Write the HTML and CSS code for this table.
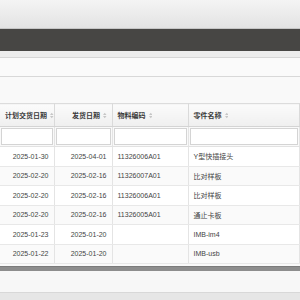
FILE: index.html
```html
<!DOCTYPE html>
<html lang="zh-CN">
<head>
    <meta charset="UTF-8">
    <title>发货计划</title>
    <link rel="stylesheet" href="styles.css">
</head>
<body>
    <div class="toolbar"></div>
    <div class="navbar"></div>
    <div class="tabs"></div>
    <div class="search-bar"></div>

    <div class="content">
        <div class="grid">
            <table class="grid-table">
                <colgroup>
                    <col class="col-plan">
                    <col class="col-ship">
                    <col class="col-code">
                    <col>
                </colgroup>
                <thead>
                    <tr class="head-row">
                        <th class="num">计划交货日期<svg class="sort" viewBox="0 0 4 8"><path d="M0 3.3 2 0.8 4 3.3Z M0 4.7 2 7.2 4 4.7Z"/></svg></th>
                        <th class="num">发货日期<svg class="sort" viewBox="0 0 4 8"><path d="M0 3.3 2 0.8 4 3.3Z M0 4.7 2 7.2 4 4.7Z"/></svg></th>
                        <th>物料编码<svg class="sort" viewBox="0 0 4 8"><path d="M0 3.3 2 0.8 4 3.3Z M0 4.7 2 7.2 4 4.7Z"/></svg></th>
                        <th>零件名称<svg class="sort" viewBox="0 0 4 8"><path d="M0 3.3 2 0.8 4 3.3Z M0 4.7 2 7.2 4 4.7Z"/></svg></th>
                    </tr>
                    <tr class="filter-row">
                        <td><input class="filter-input" type="text"></td>
                        <td><input class="filter-input" type="text"></td>
                        <td><input class="filter-input" type="text"></td>
                        <td><input class="filter-input" type="text"></td>
                    </tr>
                </thead>
                <tbody>
                    <tr>
                        <td class="num">2025-01-30</td>
                        <td class="num">2025-04-01</td>
                        <td>11326006A01</td>
                        <td>Y型快插接头</td>
                    </tr>
                    <tr>
                        <td class="num">2025-02-20</td>
                        <td class="num">2025-02-16</td>
                        <td>11326007A01</td>
                        <td>比对样板</td>
                    </tr>
                    <tr>
                        <td class="num">2025-02-20</td>
                        <td class="num">2025-02-16</td>
                        <td>11326006A01</td>
                        <td>比对样板</td>
                    </tr>
                    <tr>
                        <td class="num">2025-02-20</td>
                        <td class="num">2025-02-16</td>
                        <td>11326005A01</td>
                        <td>通止卡板</td>
                    </tr>
                    <tr>
                        <td class="num">2025-01-23</td>
                        <td class="num">2025-01-20</td>
                        <td></td>
                        <td>IMB-im4</td>
                    </tr>
                    <tr>
                        <td class="num">2025-01-22</td>
                        <td class="num">2025-01-20</td>
                        <td></td>
                        <td>IMB-usb</td>
                    </tr>
                </tbody>
            </table>
        </div>
        <div class="h-scrollbar"></div>
        <div class="pager"></div>
    </div>

    <div class="statusbar"></div>
</body>
</html>
```

FILE: styles.css
```css
* {
    margin: 0;
    padding: 0;
    box-sizing: border-box;
}

body {
    font-family: "Liberation Sans", "Noto Sans CJK SC", sans-serif;
    font-size: 7px;
    color: #333;
    background: #e6e6e6;
    width: 300px;
    height: 300px;
    overflow: hidden;
}

.toolbar {
    height: 29px;
    background: linear-gradient(#f4f4f4, #e3e3e3);
    border-bottom: 1px solid #c6c6c6;
}

.navbar {
    height: 22px;
    background: #474644;
}

.tabs {
    height: 7px;
    background: #ececec;
    border-bottom: 1px solid #d6d6d6;
}

.search-bar {
    height: 19px;
    background: #fafafa;
    border-bottom: 1px solid #d8d8d8;
}

.content {
    background: #f9f9f9;
    padding-top: 26px;
}

.grid {
    overflow: hidden;
    background: #fff;
}

.grid-table {
    width: 100%;
    table-layout: fixed;
    border-collapse: collapse;
}

.col-plan {
    width: 54px;
}

.col-ship {
    width: 58px;
}

.col-code {
    width: 76px;
}

.grid-table th,
.grid-table td {
    white-space: nowrap;
    overflow: hidden;
    text-align: left;
    padding: 0 5px;
    border-right: 1px solid #e4e4e4;
}

.grid-table th.num,
.grid-table td.num {
    text-align: right;
}

.head-row th {
    height: 23px;
    padding: 0 6px 0 5px;
    background: linear-gradient(#fbfbfb, #efefef);
    border-top: 1px solid #dcdcdc;
    border-bottom: 1px solid #d4d4d4;
    border-right-color: #dadada;
    font-weight: bold;
    color: #3a3a3a;
}

.head-row th.num {
    padding-right: 5px;
}

.sort {
    display: inline-block;
    width: 3.5px;
    height: 7px;
    margin-left: 3px;
    vertical-align: -1px;
    fill: #c6c6c6;
}

.filter-row td {
    height: 19px;
    padding: 1px;
    background: #f9f9f9;
    border-bottom: 1px solid #e2e2e2;
}

.filter-input {
    display: block;
    width: 100%;
    height: 17px;
    border: 1px solid #d4d4d4;
    background: #fff;
    outline: none;
}

tbody td {
    height: 19.5px;
    border-bottom: 1px solid #e8e8e8;
    color: #444;
}

tbody tr:nth-child(even) td {
    background: #fafafa;
}

.h-scrollbar {
    height: 5px;
    margin-top: 2px;
    background: #8d8d8d;
    border-top: 1px solid #7b7b7b;
}

.pager {
    height: 22px;
    background: #f7f7f7;
    border-bottom: 1px solid #d8d8d8;
}

.statusbar {
    height: 12px;
    background: #e6e6e6;
}
```
